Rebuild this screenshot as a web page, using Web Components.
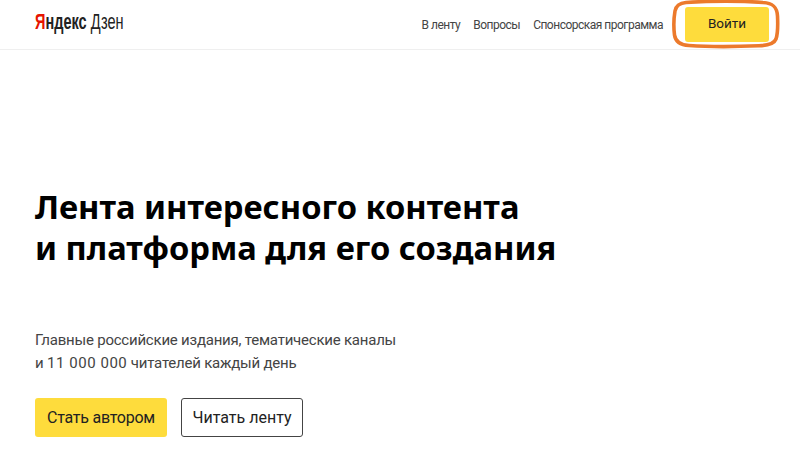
<!DOCTYPE html>
<html lang="ru">
<head>
<meta charset="utf-8">
<title>Яндекс Дзен</title>
<style>
  html, body { margin: 0; background: #fff; }
  body { font-family: "Roboto", "Noto Sans", sans-serif; color: #000; height: 462px; overflow: hidden; }
  .num { letter-spacing: .55px; }
</style>
</head>
<body>
<zen-header>
  <zen-link>В ленту</zen-link>
  <zen-link>Вопросы</zen-link>
  <zen-link>Спонсорская программа</zen-link>
</zen-header>
<zen-hero>
  <span slot="title">Лента интересного контента<br>и платформа для его создания</span>
  <span slot="text">Главные российские издания, тематические каналы<br>и <span class="num">11 000 000</span> читателей каждый день</span>
  <zen-button kind="primary">Стать автором</zen-button>
  <zen-button>Читать ленту</zen-button>
</zen-hero>
<script>
class ZenLogo extends HTMLElement {
  constructor() {
    super();
    this.attachShadow({ mode: "open" });
    this.shadowRoot.innerHTML = `
      <style>
        :host { display: block; width: 89px; height: 24px; margin-top: -6px; overflow: visible; }
        .logo {
          display: inline-block;
          font: 22px/24px "Liberation Sans", sans-serif;
          color: #222;
          white-space: nowrap;
          transform: scaleX(.66);
          transform-origin: left center;
        }
        b { font-weight: 700; }
        .red { color: #e61400; }
      </style>
      <span class="logo"><b><span class="red">Я</span>ндекс</b> Дзен</span>`;
  }
}

class ZenLink extends HTMLElement {
  constructor() {
    super();
    this.attachShadow({ mode: "open" });
    this.shadowRoot.innerHTML = `
      <style>
        :host { display: block; font: 12px/16px "Roboto", sans-serif; letter-spacing: -.5px; color: #444; white-space: nowrap; }
      </style>
      <slot></slot>`;
  }
}

class ZenHeader extends HTMLElement {
  constructor() {
    super();
    this.attachShadow({ mode: "open" });
    this.shadowRoot.innerHTML = `
      <style>
        :host {
          display: flex;
          align-items: center;
          height: 49px;
          padding: 0 31px 0 35px;
          border-bottom: 1px solid #efefef;
        }
        nav { display: flex; gap: 13px; margin-left: auto; margin-right: 22px; }
        .login {
          position: relative;
          width: 84px;
          height: 35px;
          border-radius: 3px;
          background: #fedc3c;
          color: #222;
          font: 13.500px/33px "Roboto", sans-serif;
          text-align: center;
        }
        svg { position: absolute; left: -13px; top: -8px; overflow: visible; }
      </style>
      <zen-logo></zen-logo>
      <nav><slot></slot></nav>
      <div class="login">Войти
        <svg width="110" height="50" viewBox="0 0 110 50" fill="none">
          <path transform="translate(-1 1)" d="M15 2.500C38 1 72 1 92 2.500C102 3 106 7 106.500 16C107 26 107 33 105 39C103 44 97 45.500 88 45.800C64 46.800 36 46.800 18 45.500C9 45 4.500 42 3.500 35C2.500 27 2.800 18 4 11C5 5.500 9 3 15 2.500Z" stroke="#ec7a2c" stroke-width="3.600"/>
        </svg>
      </div>`;
  }
}

class ZenButton extends HTMLElement {
  constructor() {
    super();
    this.attachShadow({ mode: "open" });
    this.shadowRoot.innerHTML = `
      <style>
        :host {
          display: flex;
          align-items: center;
          justify-content: center;
          box-sizing: border-box;
          height: 39px;
          width: 122px;
          border: 1px solid #444;
          border-radius: 3px;
          background: #fff;
          color: #222;
          font: 16px/20px "Roboto", sans-serif;
          white-space: nowrap;
        }
        :host([kind="primary"]) { width: 132px; border: 0; background: #fedc3c; letter-spacing: -.25px; }
      </style>
      <slot></slot>`;
  }
}

class ZenHero extends HTMLElement {
  constructor() {
    super();
    this.attachShadow({ mode: "open" });
    this.shadowRoot.innerHTML = `
      <style>
        :host { display: block; padding: 136px 0 0 35px; }
        h1 {
          margin: 0;
          font: 700 32.700px/41px "Noto Sans", sans-serif;
          color: #000;
        }
        p {
          margin: 61px 0 0;
          font: 15px/23px "Roboto", sans-serif;
          letter-spacing: -.22px;
          color: #444;
        }
        .actions { display: flex; gap: 14px; margin-top: 23px; }
      </style>
      <h1><slot name="title"></slot></h1>
      <p><slot name="text"></slot></p>
      <div class="actions"><slot></slot></div>`;
  }
}

customElements.define("zen-logo", ZenLogo);
customElements.define("zen-link", ZenLink);
customElements.define("zen-header", ZenHeader);
customElements.define("zen-button", ZenButton);
customElements.define("zen-hero", ZenHero);
</script>
</body>
</html>
